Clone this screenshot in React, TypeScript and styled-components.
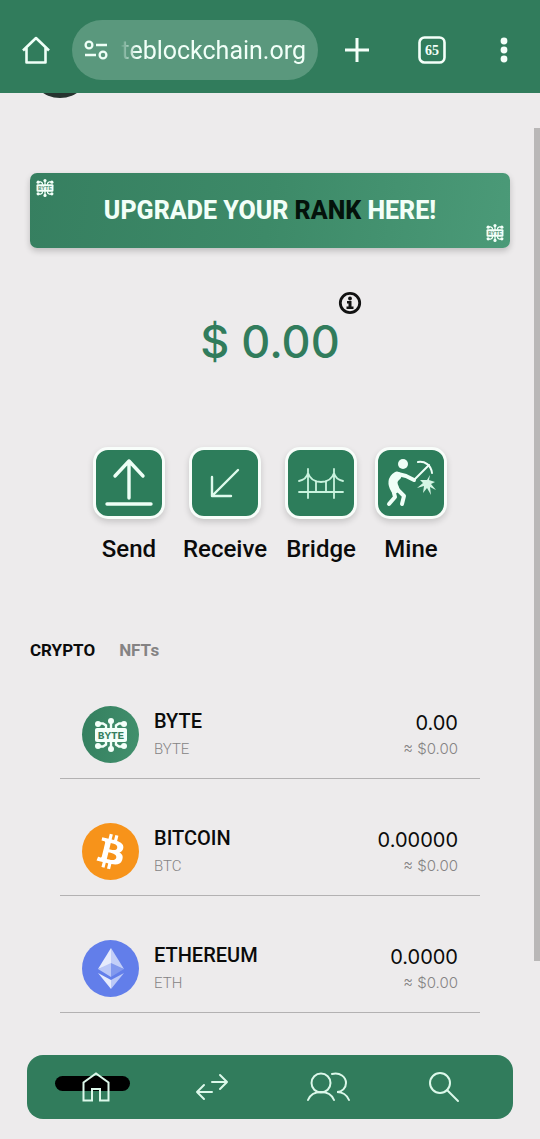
import React from "react";
import styled, { createGlobalStyle } from "styled-components";

const green = "#317c5c";
const mint = "#dcf8ea";

const GlobalStyle = createGlobalStyle`
  * { box-sizing: border-box; }
  body { margin: 0; background: #edebec; font-family: Roboto, "Liberation Sans", sans-serif; color: #0b0b0b; }
  button { font: inherit; color: inherit; background: none; border: 0; padding: 0; cursor: pointer; }
  svg { display: block; }
`;

const Page = styled.div`
  position: relative;
`;

const BrowserBar = styled.header`
  display: flex;
  align-items: center;
  padding: 7px 0 0;
  height: 93px;
  background: ${green};
`;

const BarButton = styled.button<{ $width: number }>`
  display: flex;
  flex: none;
  justify-content: center;
  width: ${(p) => p.$width}px;
`;

const AddressPill = styled.label`
  display: flex;
  flex: 1;
  align-items: center;
  gap: 12px;
  min-width: 0;
  height: 60px;
  padding: 0 12px;
  border-radius: 30px;
  background: #5a987d;
`;

const AddressInput = styled.input`
  flex: 1;
  min-width: 0;
  padding: 2px 0 0;
  border: 0;
  outline: 0;
  background: none;
  color: #f1fff8;
  font: 400 25px/32px Roboto, sans-serif;
  text-align: right;
  mask-image: linear-gradient(90deg, transparent, #000 16px);
`;

const AvatarEdge = styled.div`
  height: 6px;
  padding-left: 40px;
`;

const Scrollbar = styled.div`
  position: absolute;
  top: 128px;
  right: 0;
  width: 6px;
  height: 833px;
  background: #b9b7b7;
`;

const Banner = styled.a`
  display: flex;
  align-items: center;
  justify-content: space-between;
  height: 75px;
  margin: 74px 30px 0;
  padding: 6px;
  border-radius: 7px;
  background: linear-gradient(100deg, #367f60, #3d8a68 50%, #4b9a78);
  box-shadow: 0 3px 6px rgba(0, 0, 0, 0.2);
  color: #f2fff8;
  text-decoration: none;
`;

const BannerMark = styled.span<{ $end?: boolean }>`
  align-self: ${(p) => (p.$end ? "flex-end" : "flex-start")};
`;

const BannerText = styled.span`
  font: 800 25px/32px Roboto, sans-serif;
  white-space: nowrap;
  strong { font-weight: inherit; color: #04120b; }
`;

const Balance = styled.section`
  display: flex;
  justify-content: center;
  margin-top: 64px;
`;

const BalanceValue = styled.div`
  position: relative;
  color: ${green};
  font: 500 45px/60px Inter, sans-serif;
`;

const InfoButton = styled.button`
  position: absolute;
  top: -21px;
  right: -22px;
`;

const Actions = styled.section`
  display: flex;
  justify-content: center;
  gap: 18px;
  margin-top: 75px;
`;

const Action = styled.button`
  display: flex;
  flex-direction: column;
  align-items: center;
  gap: 16px;
  font-size: 24px;
  font-weight: 500;
  line-height: 28px;
`;

const Tile = styled.span`
  display: flex;
  align-items: center;
  justify-content: center;
  width: 72px;
  height: 72px;
  border: 3px solid #f8fdfa;
  border-radius: 15px;
  background: #2d7d5b;
  box-shadow: 0 3px 6px rgba(0, 0, 0, 0.16);
`;

const Tabs = styled.div`
  display: flex;
  gap: 24px;
  margin: 77px 30px 0;
`;

const Tab = styled.button<{ $active?: boolean }>`
  color: ${(p) => (p.$active ? "#0b0b0b" : "#858384")};
  font-size: 17px;
  font-weight: 700;
  line-height: 20px;
`;

const AssetList = styled.ul`
  margin: 2px 60px 0;
  padding: 0;
  list-style: none;
`;

const AssetRow = styled.li`
  display: flex;
  align-items: center;
  gap: 15px;
  padding: 44px 22px 15px;
  border-bottom: 1px solid #b3b1b2;
`;

const AssetName = styled.div`
  flex: 1;
  font-size: 20px;
  font-weight: 500;
  line-height: 28px;
`;

const AssetSymbol = styled.div`
  color: #858384;
  font-size: 15px;
  font-weight: 300;
  line-height: 28px;
`;

const AssetAmount = styled.div`
  font: 400 20px/28px Inter, sans-serif;
  text-align: right;
`;

const AssetValue = styled.div`
  color: #858384;
  font: 300 15px/24px Inter, sans-serif;
`;

const BottomNav = styled.nav`
  display: flex;
  height: 64px;
  margin: 42px 27px 20px;
  padding: 0 11px;
  border-radius: 16px;
  background: ${green};
`;

const NavItem = styled.button`
  position: relative;
  display: flex;
  flex: 1;
  align-items: center;
  justify-content: center;
`;

const ActiveMark = styled.span`
  position: absolute;
  top: 21px;
  left: 17px;
  width: 75px;
  height: 15px;
  border-radius: 8px;
  background: #000;
`;

const NavIcon = styled.svg`
  position: relative;
  fill: none;
  stroke: ${mint};
  stroke-width: 2;
`;

function ByteMark({ size, ink }: { size: number; ink: string }) {
  return (
    <svg width={size} height={size} viewBox="0 0 34 34" aria-hidden="true">
      <g fill="none" stroke="#f3fff9" strokeWidth="2.400">
        <path d="M17 3v28M12 11V7.500L9 5.500H4M22 11V7.500L25 5.500H30M12 23v3.500L9 28.500H4M22 23v3.500L25 28.500H30" />
      </g>
      <g fill="#f3fff9">
        <rect x="1" y="10" width="32" height="14" rx="2" />
        <circle cx="17" cy="3" r="3" />
        <circle cx="17" cy="31" r="3" />
        <circle cx="4" cy="6" r="3" />
        <circle cx="30" cy="6" r="3" />
        <circle cx="4" cy="28" r="3" />
        <circle cx="30" cy="28" r="3" />
      </g>
      <text x="17" y="21" textAnchor="middle" fontFamily="Liberation Mono, monospace" fontWeight="700" fontSize="11" fill={ink}>
        BYTE
      </text>
    </svg>
  );
}

const ByteCoinFace = styled.span`
  display: flex;
  align-items: center;
  justify-content: center;
  width: 57px;
  height: 57px;
  border-radius: 50%;
  background: linear-gradient(100deg, #347f5f, #42906d);
`;

function ByteCoin() {
  return (
    <ByteCoinFace>
      <ByteMark size={34} ink="#347f5f" />
    </ByteCoinFace>
  );
}

function BitcoinCoin() {
  return (
    <svg width="57" height="57" viewBox="0 0 32 32" aria-hidden="true">
      <circle cx="16" cy="16" r="16" fill="#f7931a" />
      <path
        fill="#fff"
        d="M23.189 14.02c.314-2.096-1.283-3.223-3.465-3.975l.708-2.84-1.728-.43-.69 2.765c-.454-.114-.92-.22-1.385-.326l.695-2.783L15.596 6l-.708 2.839c-.376-.086-.746-.17-1.104-.26l.002-.009-2.384-.595-.46 1.846s1.283.294 1.256.312c.7.175.826.638.805 1.006l-.806 3.235c.048.012.11.03.18.057l-.183-.045-1.13 4.532c-.086.212-.303.531-.793.41.018.025-1.256-.313-1.256-.313l-.858 1.978 2.25.561c.418.105.828.215 1.231.318l-.715 2.872 1.727.43.708-2.84c.472.127.93.245 1.378.357l-.706 2.828 1.728.43.715-2.866c2.948.558 5.164.333 6.097-2.333.752-2.146-.037-3.385-1.588-4.192 1.13-.26 1.98-1.003 2.207-2.538zm-3.95 5.538c-.533 2.147-4.148.986-5.32.695l.95-3.805c1.172.293 4.929.872 4.37 3.11zm.535-5.569c-.487 1.953-3.495.96-4.47.717l.86-3.45c.975.243 4.118.696 3.61 2.733z"
      />
    </svg>
  );
}

function EthereumCoin() {
  return (
    <svg width="57" height="57" viewBox="0 0 57 57" aria-hidden="true">
      <circle cx="28.500" cy="28.500" r="28.500" fill="#627eea" />
      <path d="M29 8v17L16 29z" fill="#e6ebfc" />
      <path d="M29 8v17l13 4z" fill="#c3cff8" />
      <path d="M29 23v14L16 29z" fill="#bac7f7" />
      <path d="M29 23v14l13-8z" fill="#8299ee" />
      <path d="M16 33l13 7v9z" fill="#e6ebfc" />
      <path d="M42 33l-13 7v9z" fill="#bcc9f7" />
    </svg>
  );
}

const SendIcon = () => (
  <svg width="48" height="52" viewBox="0 0 48 52" fill="none" stroke="#eefff6" strokeWidth="3.400" strokeLinecap="round" strokeLinejoin="round" aria-hidden="true">
    <path d="M24 41V4M10 19L24 4l14 15M2 47h44" />
  </svg>
);

const ReceiveIcon = () => (
  <svg width="32" height="32" viewBox="0 0 32 32" fill="none" stroke="#dffbed" strokeWidth="2.400" strokeLinecap="round" strokeLinejoin="round" aria-hidden="true">
    <path d="M29 3L3 29M3 10v19h19" />
  </svg>
);

const BridgeIcon = () => (
  <svg width="46" height="32" viewBox="0 0 46 32" fill="none" stroke="#c9f3de" strokeWidth="1.800" strokeLinecap="round" aria-hidden="true">
    <path d="M10 2v29M36 2v29M1 25h44M1 14c5-1 8-4 9-8 2 6 7 9 13 9s11-3 13-9c1 4 4 7 9 8M18 14v11M28 14v11" />
  </svg>
);

const MineIcon = () => (
  <svg width="50" height="50" viewBox="0 0 50 50" aria-hidden="true">
    <g fill="none" stroke="#effff7" strokeLinecap="round" strokeLinejoin="round">
      <path d="M11 18C6 21 6 26 9 31" strokeWidth="9" />
      <path d="M12 16l8 2 8 4" strokeWidth="4" />
      <path d="M7 31l2 8-6 7" strokeWidth="4" />
      <path d="M11 31l7 7-2 8" strokeWidth="4" />
      <path d="M28 22L43 7" strokeWidth="2" />
      <path d="M32 4c7-1 13 3 14 11" strokeWidth="2" />
    </g>
    <circle cx="17" cy="6" r="5" fill="#effff7" />
    <path d="M44 17l-1 5 6 2-4 2 5 6-6-3 1 8-4-7-4 5 1-7-7 2 6-5-3-3 7 0z" fill="#d5f5e4" />
  </svg>
);

const InfoIcon = () => (
  <svg width="24" height="24" viewBox="0 0 24 24" aria-hidden="true">
    <circle cx="12" cy="12" r="9.700" fill="none" stroke="#121212" strokeWidth="2.800" />
    <circle cx="12" cy="7.500" r="1.900" fill="#121212" />
    <path d="M9 10h4.500v5.500H15.500V18h-7v-2.500h2v-3H9z" fill="#121212" />
  </svg>
);

const actions = [
  { label: "Send", icon: <SendIcon /> },
  { label: "Receive", icon: <ReceiveIcon /> },
  { label: "Bridge", icon: <BridgeIcon /> },
  { label: "Mine", icon: <MineIcon /> },
];

const assets = [
  { name: "BYTE", symbol: "BYTE", amount: "0.00", icon: <ByteCoin /> },
  { name: "BITCOIN", symbol: "BTC", amount: "0.00000", icon: <BitcoinCoin /> },
  { name: "ETHEREUM", symbol: "ETH", amount: "0.0000", icon: <EthereumCoin /> },
];

export default function App() {
  return (
    <Page>
      <GlobalStyle />
      <BrowserBar>
        <BarButton $width={72} aria-label="Home page">
          <svg width="30" height="30" viewBox="0 0 30 30" fill="none" stroke="#effff7" strokeWidth="2.600">
            <path d="M2 15.500L15 3l13 12.500M5.500 13v14.500h19V13" strokeLinejoin="round" />
          </svg>
        </BarButton>
        <AddressPill>
          <svg width="24" height="20" viewBox="0 0 24 20" fill="none" stroke="#effff7" strokeWidth="2.300" aria-hidden="true">
            <circle cx="5" cy="5" r="3.400" />
            <path d="M12 5h11M1 15h11" />
            <circle cx="19" cy="15" r="3.400" />
          </svg>
          <AddressInput aria-label="Address" defaultValue="teblockchain.org" />
        </AddressPill>
        <BarButton $width={78} aria-label="New tab">
          <svg width="24" height="24" viewBox="0 0 24 24" stroke="#f4fff9" strokeWidth="3">
            <path d="M12 0v24M0 12h24" />
          </svg>
        </BarButton>
        <BarButton $width={72} aria-label="Open tabs">
          <svg width="28" height="28" viewBox="0 0 28 28">
            <rect x="1.500" y="1.500" width="25" height="25" rx="5" fill="none" stroke="#f4fff9" strokeWidth="2.600" />
            <text x="14" y="19" textAnchor="middle" fontFamily="Liberation Serif, serif" fontWeight="700" fontSize="14" fill="#f4fff9">
              65
            </text>
          </svg>
        </BarButton>
        <BarButton $width={72} aria-label="Menu">
          <svg width="8" height="26" viewBox="0 0 8 26" fill="#f4fff9">
            <circle cx="4" cy="4" r="3.400" />
            <circle cx="4" cy="13" r="3.400" />
            <circle cx="4" cy="22" r="3.400" />
          </svg>
        </BarButton>
      </BrowserBar>

      <AvatarEdge>
        <svg width="40" height="6" viewBox="0 0 40 6" aria-hidden="true">
          <circle cx="20" cy="-26" r="31" fill="#26332f" />
        </svg>
      </AvatarEdge>
      <Scrollbar />

      <main>
        <Banner href="#rank">
          <BannerMark>
            <ByteMark size={18} ink="#5a987d" />
          </BannerMark>
          <BannerText>
            UPGRADE YOUR <strong>RANK</strong> HERE!
          </BannerText>
          <BannerMark $end>
            <ByteMark size={18} ink="#5a987d" />
          </BannerMark>
        </Banner>

        <Balance>
          <BalanceValue>
            $ 0.00
            <InfoButton aria-label="Balance information">
              <InfoIcon />
            </InfoButton>
          </BalanceValue>
        </Balance>

        <Actions>
          {actions.map((a) => (
            <Action key={a.label}>
              <Tile>{a.icon}</Tile>
              {a.label}
            </Action>
          ))}
        </Actions>

        <Tabs>
          <Tab $active>CRYPTO</Tab>
          <Tab>NFTs</Tab>
        </Tabs>

        <AssetList>
          {assets.map((a) => (
            <AssetRow key={a.name}>
              {a.icon}
              <AssetName>
                {a.name}
                <AssetSymbol>{a.symbol}</AssetSymbol>
              </AssetName>
              <AssetAmount>
                {a.amount}
                <AssetValue>≈ $0.00</AssetValue>
              </AssetAmount>
            </AssetRow>
          ))}
        </AssetList>
      </main>

      <BottomNav>
        <NavItem aria-label="Home">
          <ActiveMark />
          <NavIcon width="28" height="30" viewBox="0 0 28 30">
            <path d="M1.500 28.500V10.500L14 1.500l12.500 9v18H18V17h-8v11.500z" />
          </NavIcon>
        </NavItem>
        <NavItem aria-label="Swap">
          <NavIcon width="34" height="28" viewBox="0 0 34 28" strokeLinecap="round" strokeLinejoin="round">
            <path d="M17 9h15M25 2l7 7-7 7M17 19H2M9 12l-7 7 7 7" />
          </NavIcon>
        </NavItem>
        <NavItem aria-label="Friends">
          <NavIcon width="44" height="30" viewBox="0 0 44 30" strokeLinecap="round">
            <circle cx="15" cy="11" r="9.500" />
            <path d="M2 28c2-5 7-8 13-8s11 3 13 8M26 2c8-2 14 3 14 9 0 5-4 9-9 9 5 0 10 3 12 8" />
          </NavIcon>
        </NavItem>
        <NavItem aria-label="Search">
          <NavIcon width="32" height="32" viewBox="0 0 32 32" strokeLinecap="round">
            <circle cx="12" cy="12" r="10" />
            <path d="M19 19l11 11" />
          </NavIcon>
        </NavItem>
      </BottomNav>
    </Page>
  );
}
